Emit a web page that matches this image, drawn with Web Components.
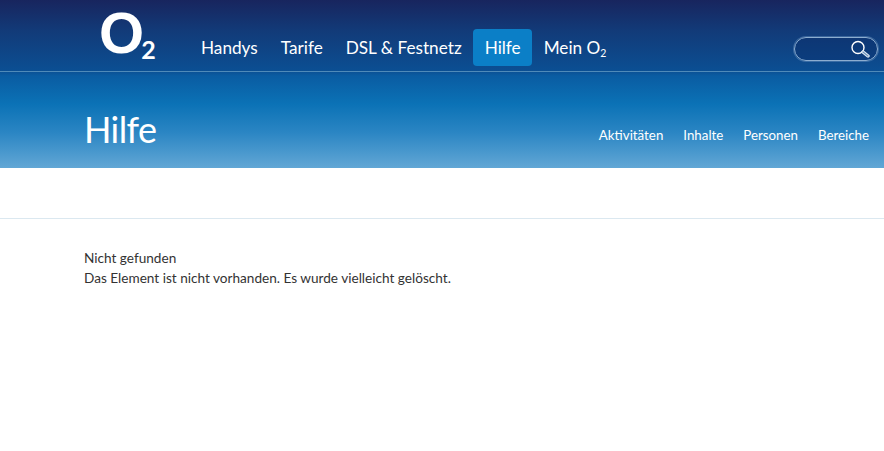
<!DOCTYPE html>
<html lang="de">
<head>
<meta charset="utf-8">
<title>Hilfe</title>
<style>
  html, body { margin: 0; padding: 0; background: #fff; }
  body { font-family: Lato, "Open Sans", sans-serif; color: #333; overflow: hidden; }
</style>
</head>
<body>
<o2-masthead>
  <o2-logo slot="logo"></o2-logo>
  <o2-nav-item slot="nav">Handys</o2-nav-item>
  <o2-nav-item slot="nav">Tarife</o2-nav-item>
  <o2-nav-item slot="nav">DSL &amp; Festnetz</o2-nav-item>
  <o2-nav-item slot="nav" active>Hilfe</o2-nav-item>
  <o2-nav-item slot="nav">Mein O<sub style="font-size:10.5px;line-height:0;vertical-align:-3px">2</sub></o2-nav-item>
  <o2-search slot="search"></o2-search>
  <span slot="title">Hilfe</span>
  <o2-sub-link slot="links">Aktivitäten</o2-sub-link>
  <o2-sub-link slot="links">Inhalte</o2-sub-link>
  <o2-sub-link slot="links">Personen</o2-sub-link>
  <o2-sub-link slot="links">Bereiche</o2-sub-link>
</o2-masthead>
<o2-content>
  <div>Nicht gefunden</div>
  <div>Das Element ist nicht vorhanden. Es wurde vielleicht gelöscht.</div>
</o2-content>
<script>
  'use strict';

  /** Small helper, every element here is just a shadow root with fixed markup */
  class ShadowElement extends HTMLElement {
    connectedCallback() {
      if (this.shadowRoot) return;
      this.attachShadow({ mode: 'open' }).innerHTML = this.constructor.markup;
    }
  }

  class O2Masthead extends ShadowElement {
    static markup = `
      <style>
        :host {
          display: block;
          height: 168px;
          background: linear-gradient(#18255e 0, #123a78 30px, #0b4f93 71px, #0a5ca2 76px, #0b72b6 104px, #2a85c3 132px, #62a7d5 168px);
        }
        .top {
          display: flex;
          align-items: flex-start;
          height: 72px;
          box-sizing: border-box;
          padding-left: 99px;
          border-bottom: 1px solid #4f8ab9;
        }
        .logo { width: 90.5px; flex: none; }
        .nav { display: flex; padding-top: 29px; }
        .search { margin-left: auto; padding: 37px 6px 0 0; }
        .bottom {
          display: flex;
          align-items: flex-start;
          justify-content: space-between;
          padding: 0 15px 0 84px;
        }
        .title { font-size: 36px; letter-spacing: -0.6px; line-height: 50px; color: #fff; padding-top: 32px; }
        .links { display: flex; gap: 20px; padding-top: 53px; }
      </style>
      <div class="top">
        <div class="logo"><slot name="logo"></slot></div>
        <div class="nav"><slot name="nav"></slot></div>
        <div class="search"><slot name="search"></slot></div>
      </div>
      <div class="bottom">
        <div class="title"><slot name="title"></slot></div>
        <div class="links"><slot name="links"></slot></div>
      </div>`;
  }

  class O2Logo extends ShadowElement {
    static markup = `
      <style>
        :host { display: flex; align-items: flex-start; color: #fff; font-family: "Liberation Sans", sans-serif; font-weight: 700; height: 66px; }
        .o { font-size: 58px; line-height: 67px; letter-spacing: -3px; margin-top: -1px; }
        .two { font-family: Lato, sans-serif; font-size: 25px; line-height: 30px; font-weight: 700; margin-top: 34px; }
      </style>
      <span class="o">O</span><span class="two">2</span>`;
  }

  class O2NavItem extends ShadowElement {
    static markup = `
      <style>
        :host {
          display: block;
          padding: 0 11.5px;
          height: 37px;
          line-height: 37px;
          font-size: 17.2px;
          color: #fff;
          border-radius: 4px;
          white-space: nowrap;
        }
        :host([active]) { background: #0b7fc7; }
      </style>
      <slot></slot>`;
  }

  class O2Search extends ShadowElement {
    static markup = `
      <style>
        :host {
          display: flex;
          align-items: center;
          justify-content: flex-end;
          box-sizing: border-box;
          width: 84px;
          height: 24px;
          padding-right: 5px;
          border: 1px solid #8cadd0;
          border-radius: 12px;
          background: rgba(10, 40, 100, .35);
          box-shadow: 0 0 0 1px rgba(110, 150, 195, .45);
        }
        svg { display: block; }
      </style>
      <svg width="22" height="18" viewBox="0 0 22 18" fill="none">
        <circle cx="8" cy="7.5" r="6" stroke="#fff" stroke-width="1.4"/>
        <path d="M13 12l5 4" stroke="#e4ecf5" stroke-width="3.4" stroke-linecap="round"/>
        <path d="M13 12l5 4" stroke="#6f95bd" stroke-width="1.2" stroke-linecap="round"/>
      </svg>`;
  }

  class O2SubLink extends ShadowElement {
    static markup = `
      <style>
        :host { display: block; font-size: 13.3px; line-height: 20px; color: #fff; white-space: nowrap; }
      </style>
      <slot></slot>`;
  }

  class O2Content extends ShadowElement {
    static markup = `
      <style>
        :host { display: block; margin-top: 50px; padding: 29px 84px 0; border-top: 1px solid #dbe8f0; font-size: 13.6px; line-height: 20px; color: #333; }
      </style>
      <slot></slot>`;
  }

  customElements.define('o2-masthead', O2Masthead);
  customElements.define('o2-logo', O2Logo);
  customElements.define('o2-nav-item', O2NavItem);
  customElements.define('o2-search', O2Search);
  customElements.define('o2-sub-link', O2SubLink);
  customElements.define('o2-content', O2Content);
</script>
</body>
</html>
